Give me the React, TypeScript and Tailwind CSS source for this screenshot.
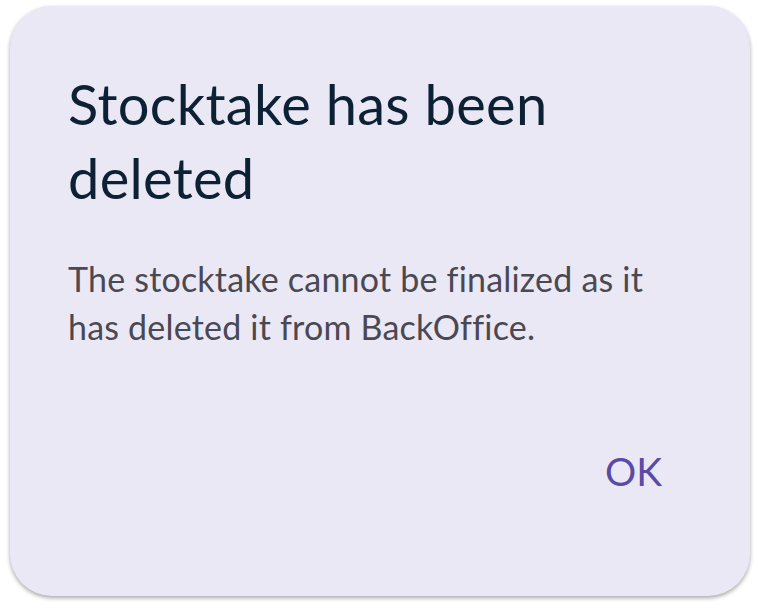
export default function App() {
  return (
    <div className="w-[759px] h-[608px] bg-white pt-[6px] pl-[10px] font-['Lato',sans-serif]">
      <div className="w-[740px] h-[590px] rounded-[42px] bg-[#eae8f5] shadow-[0_2px_4px_rgba(0,0,0,0.35)] pl-[58px] pr-[88px] pt-[61px] flex flex-col">
        <h1 className="text-[56px] leading-[74px] tracking-[0.3px] text-[#0d2135]">
          Stocktake has been deleted
        </h1>
        <p className="mt-[40px] text-[34px] leading-[48px] tracking-[0.2px] text-[#4a4852]">
          The stocktake cannot be finalized as it has deleted it from BackOffice.
        </p>
        <div className="flex justify-end mt-[101px]">
          <button className="text-[39px] leading-none text-[#5b4aa8]">OK</button>
        </div>
      </div>
    </div>
  );
}
